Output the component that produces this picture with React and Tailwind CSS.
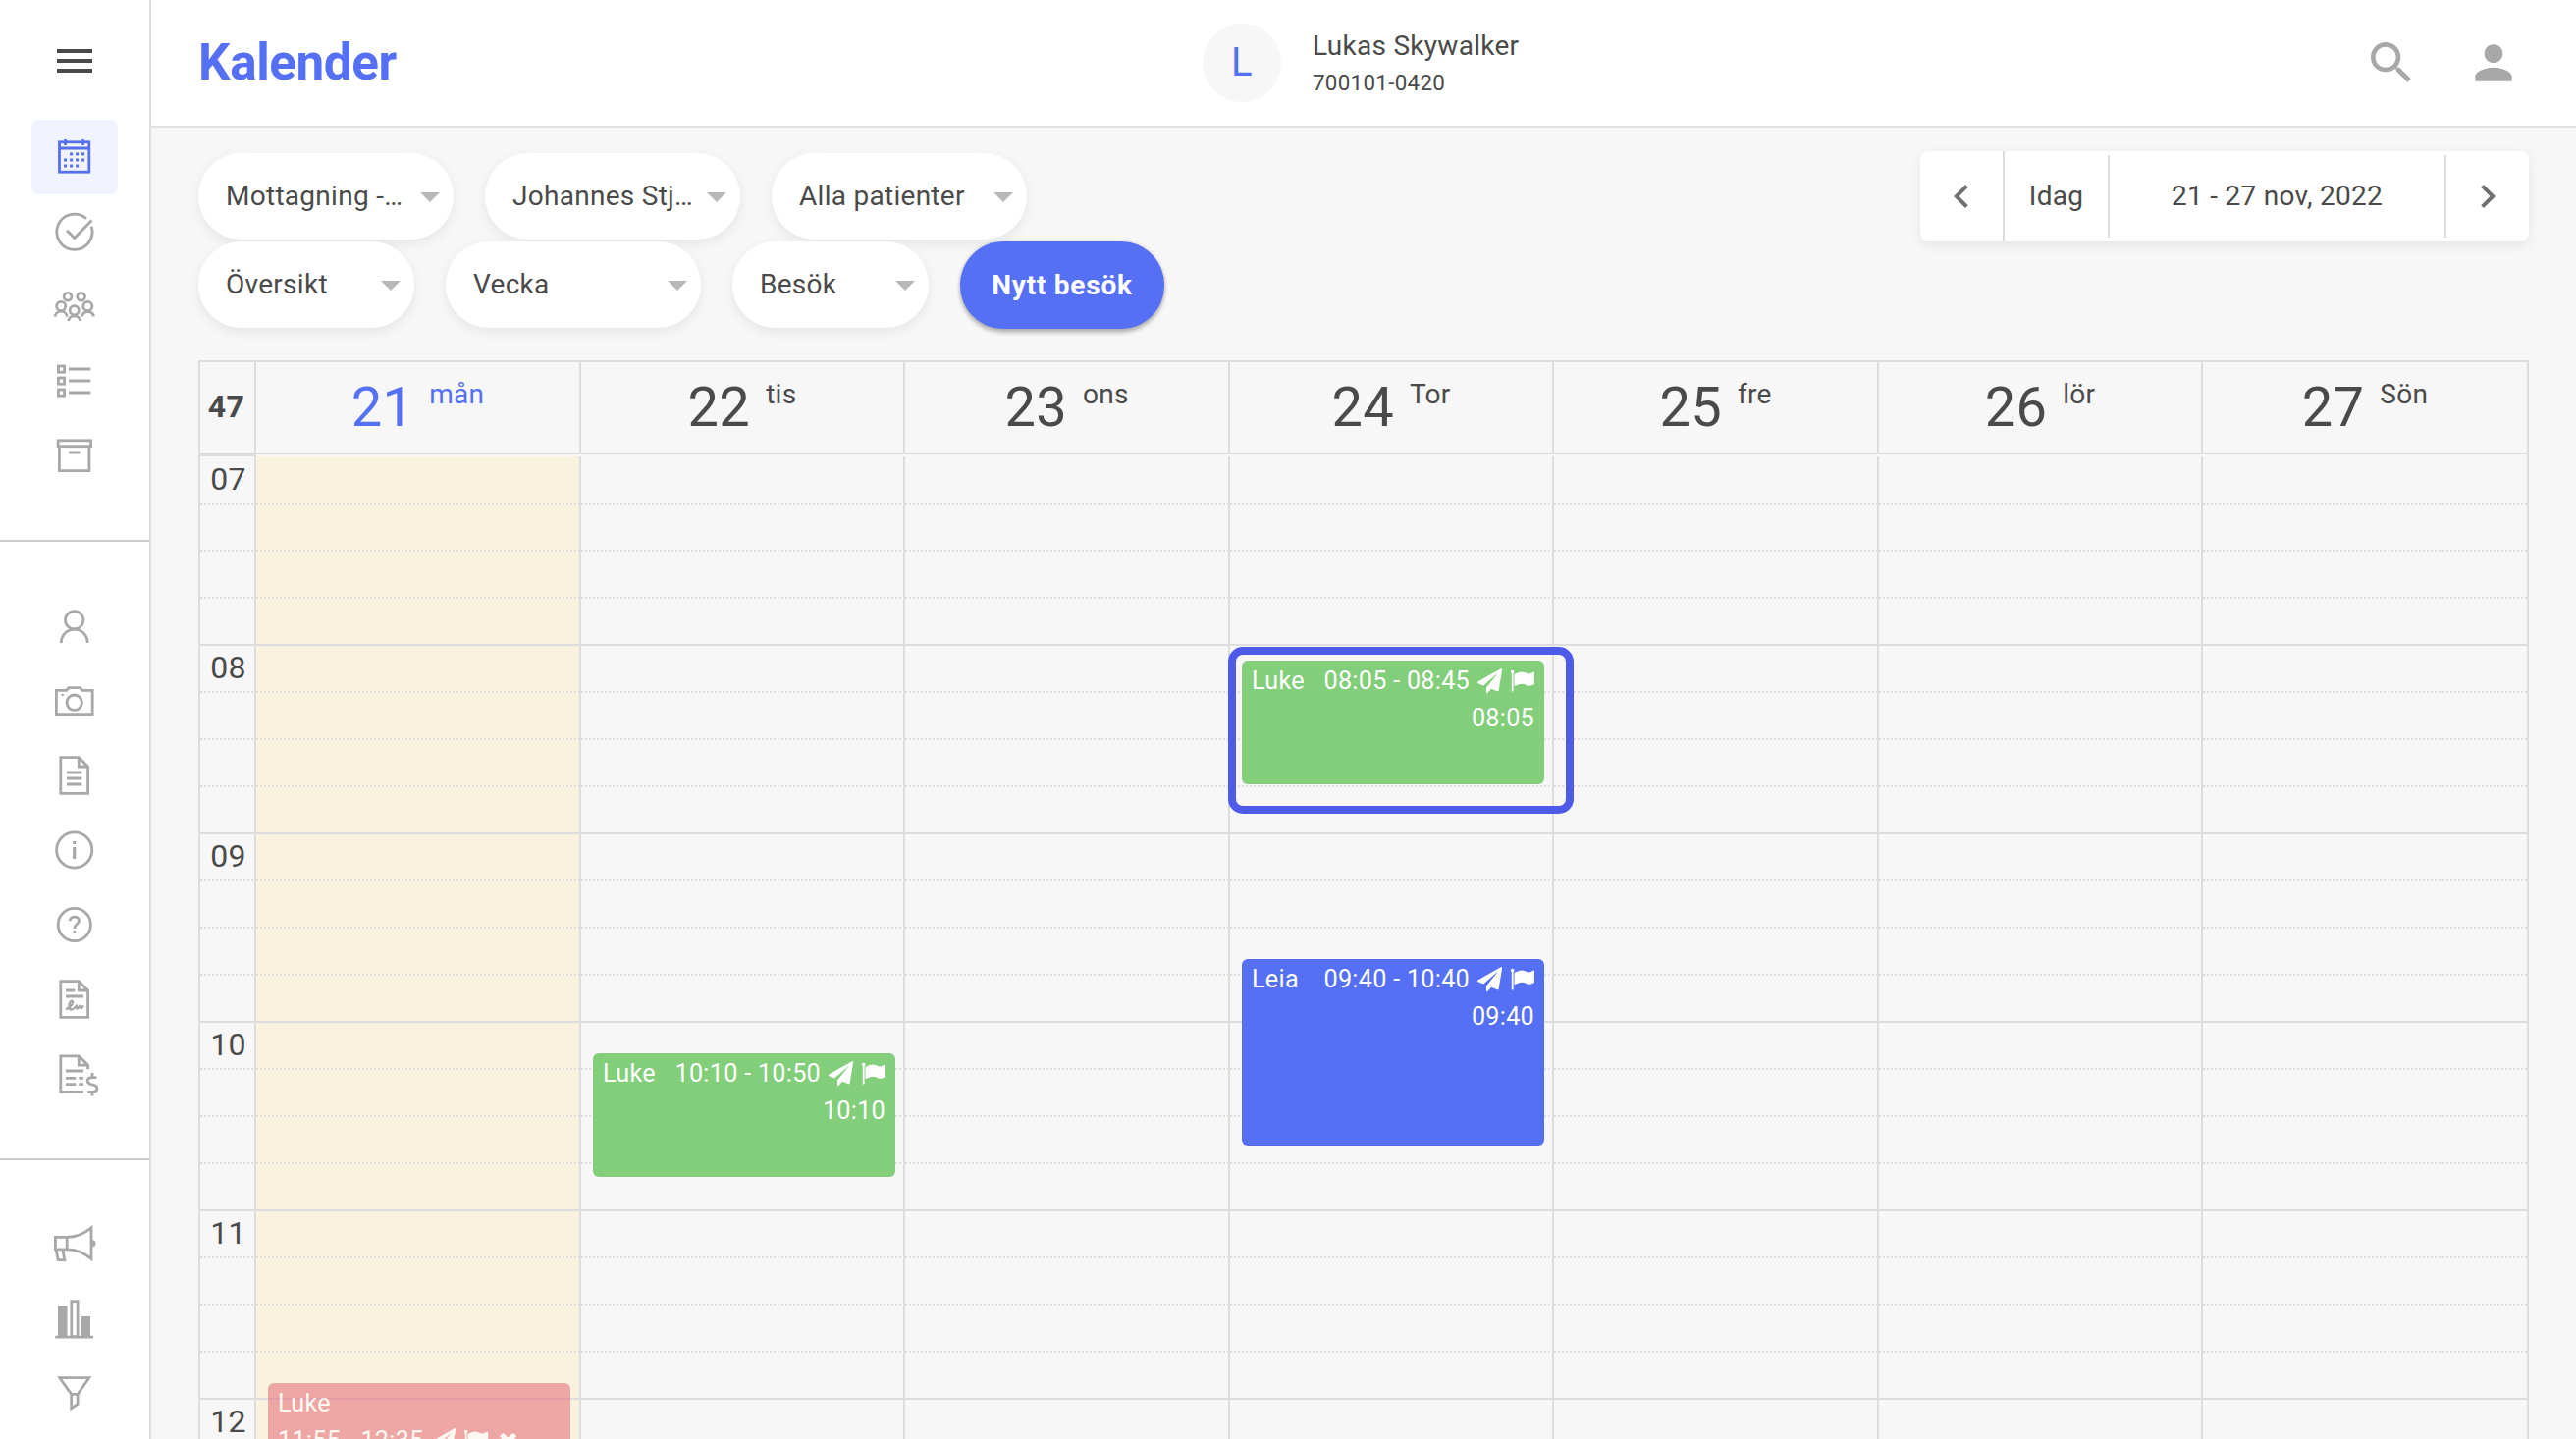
import React from "react";

const Svg = ({ children }) => (
  <svg
    viewBox="0 0 48 48"
    className="h-12 w-12 overflow-visible"
    fill="none"
    stroke="currentColor"
    strokeWidth="2.8"
  >
    {children}
  </svg>
);

const Dot = ({ x, y }) => (
  <rect x={x - 1.5} y={y - 1.5} width="3" height="3" fill="currentColor" stroke="none" />
);

const CalendarIcon = () => (
  <Svg>
    <rect x="8.5" y="8.8" width="30.3" height="30.4" />
    <path d="M8.5 15H38.8M14.6 6v6M32.6 6v6" />
    {[20.6, 26.6, 32.6].map((x) => <Dot key={x} x={x} y={20.9} />)}
    {[14.6, 20.6, 26.6, 32.6].map((x) => <Dot key={x} x={x} y={27} />)}
    {[14.6, 20.6, 26.6].map((x) => <Dot key={x} x={x} y={33} />)}
  </Svg>
);

const CheckIcon = () => (
  <Svg>
    <path d="M36 10.8A18.1 18.1 0 1 0 41.1 18.6" />
    <path d="M16 22.8l7.8 7.8L41.5 12.4" />
  </Svg>
);

const GroupIcon = () => (
  <Svg>
    <circle cx="17" cy="14.3" r="3.9" />
    <circle cx="30.6" cy="14.3" r="3.9" />
    <circle cx="10.2" cy="24" r="4.6" />
    <circle cx="37.3" cy="24" r="4.6" />
    <circle cx="23.7" cy="28.3" r="4.6" />
    <path d="M4 34.6A6.2 6.2 0 0 1 16.3 34.6M17.6 39A6.2 6.2 0 0 1 29.8 39M31.4 34.6A6.2 6.2 0 0 1 43.6 34.6" />
  </Svg>
);

const ListIcon = () => (
  <Svg>
    <rect x="7.4" y="9" width="6.2" height="6.2" />
    <rect x="7.4" y="21" width="6.2" height="6.2" />
    <rect x="7.4" y="33" width="6.2" height="6.2" />
    <path d="M18 12H40.3M18 24H40.3M18 36H40.3" />
  </Svg>
);

const ArchiveIcon = () => (
  <Svg>
    <rect x="7.1" y="8.8" width="33.5" height="5.9" />
    <path d="M8.4 15V39.6H38.9V15" />
    <path d="M19.2 21h9.2" strokeLinecap="round" />
  </Svg>
);

const UserIcon = () => (
  <Svg>
    <circle cx="23.7" cy="17.8" r="9.2" />
    <path d="M10.3 41A13.4 13.9 0 0 1 37.2 41" />
  </Svg>
);

const CameraIcon = () => (
  <Svg>
    <path d="M5.4 13.4H15.8L18 10.7H29.6L31.8 13.4H42.2V37.6H5.4Z" />
    <circle cx="23.7" cy="25.7" r="7.7" />
    <circle cx="11.7" cy="18" r="1.3" fill="currentColor" stroke="none" />
  </Svg>
);

const docOutline = "M9.8 5.7H28.3L37.6 15V42.3H9.8ZM28.3 5.7V15H37.6";

const DocumentIcon = () => (
  <Svg>
    <path d={docOutline} />
    <path d="M16 21H31.3M16 27H31.3M16 33H31.3" />
  </Svg>
);

const InfoIcon = () => (
  <Svg>
    <circle cx="23.7" cy="24" r="18.1" />
    <path d="M23.7 21V33M23.7 15v3" strokeWidth="3.2" />
  </Svg>
);

const HelpIcon = () => (
  <Svg>
    <circle cx="23.8" cy="24" r="16.6" />
    <path d="M19.2 20.3C19.2 14.8 28.6 14.8 28.6 20C28.6 23.3 23.8 23.4 23.8 28M23.8 30v3" />
  </Svg>
);

const SignatureIcon = () => (
  <Svg>
    <path d={docOutline} />
    <path d="M15 15H24.2M15 21H33" />
    <path
      d="M15 34.2C19 32.8 22.4 29 22.2 26.8C21.8 24.8 18.8 25.8 18.4 30C18 35.6 21.5 36 25.8 30.8C26.4 31.6 25.6 33.4 26.6 33.6C27.8 33.4 28.6 31 29.6 30.8C30.2 31 29.8 32.8 30.6 33C31.4 33 32 31.8 33 30.4"
      strokeWidth="2.4"
    />
  </Svg>
);

const InvoiceIcon = () => (
  <Svg>
    <path d="M33 42.3H9.8V5.9H28.3L37.6 15.2V19.3M28.3 5.9V15.2H37.6" />
    <path d="M15 21H33M15 28.3H25.2M28.4 28.3H33M15 34.7H25.2M28.4 34.7H33" />
    <path d="M46.4 27.6H42.2C35.6 27.6 36 33.4 40.6 34.6C44.4 35.4 46.9 36 46.9 38.6C46.9 41.4 45 42.4 42.2 42.4H37.2M42 23v4M42 42v4.4" />
  </Svg>
);

const MegaphoneIcon = () => (
  <Svg>
    <path d="M4.4 16.3H16.2C25 16.3 34 12.5 41 6.8V38.4C34 32.5 25 28.8 16.2 28.8H4.4ZM16.2 16.3V28.8" />
    <path d="M5 28.8L7.2 39.6H13.8L11.8 28.8" />
    <path d="M42 19.2a3.5 3.5 0 0 1 0 7z" fill="currentColor" stroke="none" />
  </Svg>
);

const BarsIcon = () => (
  <Svg>
    <path d="M7 10.4H16.5V42H7ZM31 21H40V42H31Z" fill="currentColor" stroke="none" />
    <rect x="20.8" y="5.7" width="6.3" height="36" />
    <path d="M4.3 42.2H43" />
  </Svg>
);

const FunnelIcon = () => (
  <Svg>
    <path d="M8.8 7.7H38.8L27.1 24.4V34.4L20.7 38.6V24.4ZM20.7 24.4H27.1" />
  </Svg>
);

const NavItem = ({ icon: Icon, active }) => (
  <a
    className={
      active
        ? "flex h-[76px] w-[88px] items-center justify-center rounded-lg bg-[#f1f4fe] text-[#5570f5]"
        : "flex h-[76px] w-[88px] items-center justify-center text-[#a8a8a8]"
    }
  >
    <Icon />
  </a>
);

const Sidebar = () => (
  <aside className="flex w-[154px] shrink-0 flex-col items-center border-r-2 border-[#dddddd] bg-white">
    <div className="flex h-[122px] items-center justify-center pt-0.5">
      <svg viewBox="0 0 24 24" className="h-12 w-12 text-[#4a4a4a]" fill="currentColor">
        <path d="M3 18h18v-2H3v2zm0-5h18v-2H3v2zm0-7v2h18V6H3z" />
      </svg>
    </div>
    <nav className="flex w-full flex-col items-center pb-12">
      <NavItem icon={CalendarIcon} active />
      <NavItem icon={CheckIcon} />
      <NavItem icon={GroupIcon} />
      <NavItem icon={ListIcon} />
      <NavItem icon={ArchiveIcon} />
    </nav>
    <nav className="flex w-full flex-col items-center border-t-2 border-[#cccccc] py-12">
      <NavItem icon={UserIcon} />
      <NavItem icon={CameraIcon} />
      <NavItem icon={DocumentIcon} />
      <NavItem icon={InfoIcon} />
      <NavItem icon={HelpIcon} />
      <NavItem icon={SignatureIcon} />
      <NavItem icon={InvoiceIcon} />
    </nav>
    <nav className="flex w-full flex-col items-center border-t-2 border-[#cccccc] pt-12">
      <NavItem icon={MegaphoneIcon} />
      <NavItem icon={BarsIcon} />
      <NavItem icon={FunnelIcon} />
    </nav>
  </aside>
);

const Header = () => (
  <header className="flex h-[130px] shrink-0 items-center border-b-2 border-[#dde1e5] bg-white pr-14">
    <h1 className="w-[1071px] pl-12 text-[51.2px] leading-none font-bold tracking-[-0.4px] text-[#5570f5]">
      Kalender
    </h1>
    <div className="flex h-20 w-20 items-center justify-center rounded-full bg-[#f7f7f7] text-[40px] text-[#5570f5]">
      L
    </div>
    <div className="ml-8 flex flex-col pb-0.5">
      <span className="text-[28px] leading-[42px]">Lukas Skywalker</span>
      <span className="text-[22.4px] leading-[33px]">700101-0420</span>
    </div>
    <div className="ml-auto flex gap-12 text-[#a8a8a8]">
      <svg viewBox="0 0 24 24" className="h-14 w-14" fill="currentColor">
        <path d="M15.5 14h-.79l-.28-.27C15.41 12.59 16 11.11 16 9.5 16 5.91 13.09 3 9.5 3S3 5.91 3 9.5 5.91 16 9.5 16c1.61 0 3.09-.59 4.23-1.57l.27.28v.79l5 4.99L20.49 19l-4.99-5zm-6 0C7.01 14 5 11.99 5 9.5S7.01 5 9.5 5 14 7.01 14 9.5 11.99 14 9.5 14z" />
      </svg>
      <svg viewBox="0 0 24 24" className="h-14 w-14" fill="currentColor">
        <path d="M12 12c2.21 0 4-1.79 4-4s-1.79-4-4-4-4 1.79-4 4 1.79 4 4 4zm0 2c-2.67 0-8 1.34-8 4v2h16v-2c0-2.66-5.33-4-8-4z" />
      </svg>
    </div>
  </header>
);

const Select = ({ label, className }) => (
  <button
    className={`flex h-[88px] items-center justify-between rounded-[44px] bg-white pr-3.5 pl-7 text-[28px] shadow-[0_4px_12px_rgba(40,50,100,0.09)] ${className}`}
  >
    <span className="truncate">{label}</span>
    <svg viewBox="0 0 20 10" className="mt-0.5 h-2.5 w-5 shrink-0" fill="#b8b8b8">
      <path d="M0 0h20L10 10z" />
    </svg>
  </button>
);

const Chevron = ({ d }) => (
  <svg viewBox="0 0 24 24" className="h-12 w-12" fill="#707070">
    <path d={d} />
  </svg>
);

const Toolbar = () => (
  <div className="flex items-start justify-between pr-12 pl-12">
    <div className="flex flex-col gap-0.5 pt-0.5">
      <div className="flex gap-8">
        <Select label="Mottagning -…" className="w-[260px]" />
        <Select label="Johannes Stj…" className="w-[260px]" />
        <Select label="Alla patienter" className="w-[260px]" />
      </div>
      <div className="flex gap-8">
        <Select label="Översikt" className="w-[220px]" />
        <Select label="Vecka" className="w-[260px]" />
        <Select label="Besök" className="w-[200px]" />
        <button className="h-[89px] w-[208px] rounded-[44px] bg-[#5570f5] text-[28px] font-bold tracking-[0.76px] text-white shadow-[0_4px_4px_rgba(0,0,0,0.24),0_0_4px_rgba(0,0,0,0.16)]">
          Nytt besök
        </button>
      </div>
    </div>
    <div className="flex h-[92px] w-[620px] items-center rounded-lg bg-white text-[28px] shadow-[0_4px_12px_rgba(40,50,100,0.09)]">
      <div className="flex h-full w-[86px] items-center justify-center border-r-2 border-[#dddddd]">
        <Chevron d="M15.41 7.41 14 6l-6 6 6 6 1.41-1.41L10.83 12z" />
      </div>
      <div className="flex h-[84px] w-[107px] items-center justify-center border-r-2 border-[#dddddd]">
        Idag
      </div>
      <div className="flex h-[84px] w-[343px] items-center justify-center border-r-2 border-[#dddddd]">
        21 - 27 nov, 2022
      </div>
      <div className="flex flex-1 justify-center">
        <Chevron d="M10 6 8.59 7.41 13.17 12l-4.58 4.59L10 18l6-6z" />
      </div>
    </div>
  </div>
);

const Glyph = ({ d }) => (
  <svg viewBox="0 0 1792 1792" className="h-[25.2px] w-[25.2px] shrink-0" fill="currentColor">
    <path d={d} />
  </svg>
);

const Plane = () => (
  <Glyph d="M1764 11q33 24 27 64l-256 1536q-5 29-32 45-14 8-31 8-11 0-24-5l-453-185-242 295q-18 23-49 23-13 0-22-4-19-7-30.5-23.5t-11.5-36.5v-349l864-1059-1069 925-395-162q-37-14-40-55-2-40 32-59l1664-960q15-9 32-9 20 0 36 11z" />
);
const Flag = () => (
  <Glyph d="M320 256q0 72-64 110v1266q0 13-9.5 22.5t-22.5 9.5h-64q-13 0-22.5-9.5t-9.5-22.5v-1266q-64-38-64-110 0-53 37.5-90.5t90.5-37.5 90.5 37.5 37.5 90.5zm1472 64v763q0 25-12.5 38.5t-39.5 27.5q-215 116-369 116-61 0-123.5-22t-108.5-48-115.5-48-142.5-22q-192 0-464 146-17 9-33 9-26 0-45-19t-19-45v-742q0-32 31-55 21-14 79-43 236-120 421-120 107 0 200 29t219 88q38 19 88 19 54 0 117.5-21t110-47 88-47 54.5-21q26 0 45 19t19 45z" />
);
const Cross = () => (
  <Glyph d="M1490 1322q0 40-28 68l-136 136q-28 28-68 28t-68-28l-294-294-294 294q-28 28-68 28t-68-28l-136-136q-28-28-28-68t28-68l294-294-294-294q-28-28-28-68t28-68l136-136q28-28 68-28t68 28l294 294 294-294q28-28 68-28t68 28l136 136q28 28 28 68t-28 68l-294 294 294 294q28 28 28 68z" />
);

const Event = ({ name, time, start, className }) => (
  <div
    className={`absolute left-3 w-[308px] rounded-md px-2.5 pt-0.5 text-[25.2px] leading-[38px] text-white ${className}`}
  >
    <div className="flex items-center justify-between">
      <span>{name}</span>
      <span className="flex items-center gap-[7.8px]">
        {time}
        <Plane />
        <Flag />
      </span>
    </div>
    <div className="text-right">{start}</div>
  </div>
);

const CancelledEvent = () => (
  <div className="absolute top-[944px] left-3 h-[126px] w-[308px] rounded-md bg-[#e97480] px-2.5 pt-0.5 text-[25.2px] leading-[38px] text-white opacity-60">
    <div>Luke</div>
    <div className="flex items-center gap-[7.8px]">
      11:55 - 12:35
      <Plane />
      <Flag />
      <Cross />
    </div>
  </div>
);

const days = [
  { date: "21", name: "mån", today: true },
  { date: "22", name: "tis" },
  { date: "23", name: "ons" },
  { date: "24", name: "Tor" },
  { date: "25", name: "fre" },
  { date: "26", name: "lör" },
  { date: "27", name: "Sön" },
];

const hours = ["07", "08", "09", "10", "11", "12"];

const columns = "grid grid-cols-[57px_331px_330px_331px_330px_331px_330px_332px]";

const Dotted = () => (
  <div className="h-12 pt-[46px]">
    <div className="h-0.5 bg-[repeating-linear-gradient(90deg,#dddddd_0_2px,transparent_2px_4px)]" />
  </div>
);

const HourSlots = ({ label }) => (
  <div className="h-48 border-b-2 border-[#dddddd]">
    <div className="h-12 pt-[46px]">
      {label && (
        <div className="-mt-[46px] h-[46px] pl-0.5 text-center text-[32px] leading-[44px]">{label}</div>
      )}
      <div className="h-0.5 bg-[repeating-linear-gradient(90deg,#dddddd_0_2px,transparent_2px_4px)]" />
    </div>
    <Dotted />
    <Dotted />
  </div>
);

const DayColumn = ({ today, children }) => (
  <div
    className={
      today
        ? "relative border-r-2 border-[#dddddd] bg-[#f8f2df] pt-px"
        : "relative border-r-2 border-[#dddddd] pt-px"
    }
  >
    {hours.map((h) => <HourSlots key={h} />)}
    {children}
  </div>
);

const Calendar = () => (
  <section className="mt-8 ml-12 w-[2374px] border-t-2 border-l-2 border-[#dddddd]">
    <div className={`${columns} h-[94px] border-b-2 border-[#dddddd]`}>
      <div className="flex items-center justify-center border-r-2 border-[#dddddd] pr-0.5 pb-0.5 text-[32px] font-bold">
        47
      </div>
      {days.map((d) => (
        <div
          key={d.date}
          className={
            d.today
              ? "flex items-start justify-center gap-4 border-r-2 border-[#dddddd] text-[#5570f5]"
              : "flex items-start justify-center gap-4 border-r-2 border-[#dddddd]"
          }
        >
          <span className="text-[56px] leading-[92px]">{d.date}</span>
          <span className="text-[28px] leading-[66px]">{d.name}</span>
        </div>
      ))}
    </div>
    <div className={`${columns} h-0.5`}>
      <div className="bg-[#dddddd]" />
      <div className="col-span-7 border-r-2 border-[#dddddd]" />
    </div>
    <div className={columns}>
      <div className="border-r-2 border-[#dddddd] pt-px">
        {hours.map((h) => <HourSlots key={h} label={h} />)}
      </div>
      <DayColumn today>
        <CancelledEvent />
      </DayColumn>
      <DayColumn>
        <Event name="Luke" time="10:10 - 10:50" start="10:10" className="top-[608px] h-[126px] bg-[#82ce7b]" />
      </DayColumn>
      <DayColumn />
      <DayColumn>
        <Event name="Luke" time="08:05 - 08:45" start="08:05" className="top-[208px] h-[126px] bg-[#82ce7b]" />
        <Event name="Leia" time="09:40 - 10:40" start="09:40" className="top-[512px] h-[190px] bg-[#5570f5]" />
        <div className="absolute top-[194px] -left-0.5 z-10 h-[170px] w-[352px] rounded-[15px] border-8 border-[#4f5be8]" />
      </DayColumn>
      <DayColumn />
      <DayColumn />
      <DayColumn />
    </div>
  </section>
);

export default function App() {
  return (
    <div className="flex h-[1466px] w-[2624px] overflow-hidden bg-[#f7f7f7] font-['Roboto',sans-serif] tracking-[0.28px] text-[#4a4a4a]">
      <Sidebar />
      <main className="flex min-w-0 flex-1 flex-col">
        <Header />
        <div className="pt-6">
          <Toolbar />
          <Calendar />
        </div>
      </main>
    </div>
  );
}
